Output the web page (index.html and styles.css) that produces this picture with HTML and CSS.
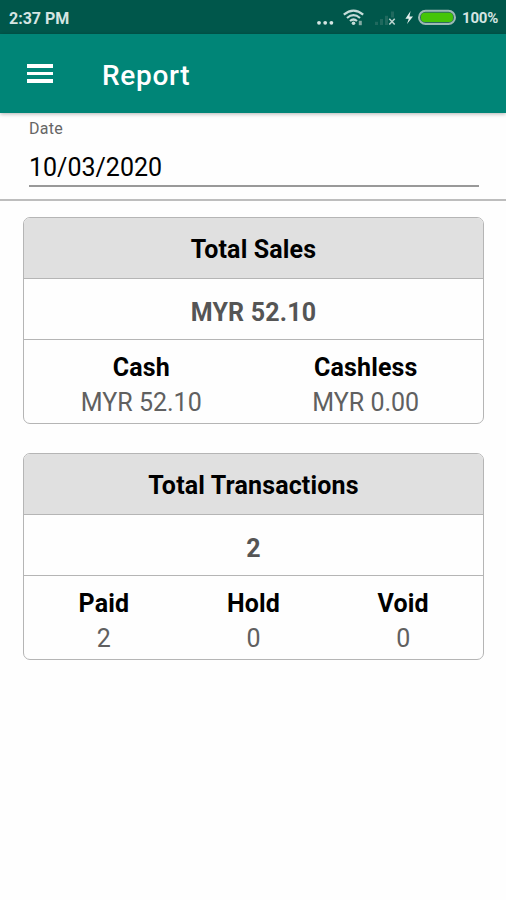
FILE: index.html
```
<!DOCTYPE html>
<html lang="en">
<head>
  <meta charset="UTF-8" />
  <meta name="viewport" content="width=device-width, initial-scale=1.0"/>
  <title>Report</title>
  <link rel="stylesheet" href="styles.css">
</head>
<body>

  <!-- Status bar -->
  <div class="status-bar">
    <span class="clock">2:37 PM</span>
    <svg class="status-icons" width="140" height="34" viewBox="0 0 140 34">
      <!-- dots -->
      <g fill="#d5e5e2">
        <circle cx="3" cy="22.8" r="1.9"/>
        <circle cx="9.2" cy="22.8" r="1.9"/>
        <circle cx="15.4" cy="22.8" r="1.9"/>
      </g>
      <!-- wifi -->
      <g fill="none" stroke="#c5dcd8" stroke-width="2.2">
        <path d="M27.8 14.6 Q37.5 6.6 47.2 14.6"/>
        <path d="M31 18 Q37.5 12.4 44 18"/>
        <path d="M34 21 Q37.5 18 41 21"/>
      </g>
      <circle cx="37.5" cy="23.2" r="1.8" fill="#c5dcd8"/>
      <path d="M44.3 20.8v4.4" stroke="#83aaa3" stroke-width="3"/>
      <!-- signal -->
      <g fill="#20695e">
        <rect x="59" y="21.8" width="3" height="3.2"/>
        <rect x="64" y="19" width="3" height="6"/>
        <rect x="69" y="15.8" width="3" height="9.2"/>
        <rect x="75" y="11.5" width="3" height="6"/>
      </g>
      <path d="M73.3 18.8l5.4 5.8M78.7 18.8l-5.4 5.8" stroke="#bdd4d0" stroke-width="1.5"/>
      <!-- charging -->
      <path d="M94.6 11l-5.2 7.8h3.4l-1.8 5.2 6-7.4h-3.6z" fill="#e4efed"/>
      <!-- battery -->
      <rect x="103" y="10.8" width="36" height="13.2" rx="6.6" fill="#2e6a60" stroke="#9db9b5" stroke-width="2"/>
      <rect x="105" y="12.8" width="32" height="9.2" rx="4" fill="#45c508"/>
    </svg>
    <span class="battery-level">100%</span>
  </div>

  <!-- Header -->
  <header>
    <div class="hamburger-menu">
      <span></span>
      <span></span>
      <span></span>
    </div>
    <h1>Report</h1>
  </header>

  <!-- Date -->
  <div class="date-section">
    <div class="date-field">
      <label>Date</label>
      <div class="date-value">10/03/2020</div>
    </div>
  </div>

  <!-- Main Content -->
  <div class="content">
    <div class="card">
      <h2>Total Sales</h2>
      <div class="total">MYR 52.10</div>
      <div class="details two">
        <div class="item">
          <h3>Cash</h3>
          <p>MYR 52.10</p>
        </div>
        <div class="item">
          <h3>Cashless</h3>
          <p>MYR 0.00</p>
        </div>
      </div>
    </div>

    <div class="card">
      <h2>Total Transactions</h2>
      <div class="total">2</div>
      <div class="details three">
        <div class="item">
          <h3>Paid</h3>
          <p>2</p>
        </div>
        <div class="item">
          <h3>Hold</h3>
          <p>0</p>
        </div>
        <div class="item">
          <h3>Void</h3>
          <p>0</p>
        </div>
      </div>
    </div>
  </div>

</body>
</html>
```
FILE: styles.css
```
:root {
  --primary-color: #008577;
  --primary-dark: #00574b;
  --border-color: #b5b5b5;
}

* {
  box-sizing: border-box;
  margin: 0;
  padding: 0;
}

body {
  font-family: Roboto, sans-serif;
  background-color: #fefefe;
  color: #000;
  min-height: 100vh;
}

.status-bar {
  display: flex;
  align-items: center;
  height: 34px;
  padding: 0 8px 0 9px;
  background-color: var(--primary-dark);
  color: #d5e5e2;
  font-size: 16px;
  font-weight: 700;
}

.clock {
  flex: 1;
  padding-top: 2px;
}

.battery-level {
  width: 36px;
  margin-left: 6px;
  padding-top: 2px;
  font-size: 15px;
  letter-spacing: -0.2px;
}

header {
  display: flex;
  align-items: center;
  height: 79px;
  padding-left: 27px;
  background-color: var(--primary-color);
  color: white;
  box-shadow: 0 1px 4px rgba(0, 0, 0, 0.3);
  position: relative;
}

.hamburger-menu {
  display: flex;
  flex-direction: column;
  gap: 4px;
  width: 26px;
}

.hamburger-menu span {
  height: 3.7px;
  background-color: white;
}

h1 {
  margin-left: 49px;
  padding-top: 3px;
  font-size: 28px;
  font-weight: 500;
  letter-spacing: 0.7px;
}

.date-section {
  height: 88px;
  padding: 6px 27px 0 29px;
  border-bottom: 2px solid #bdbdbd;
}

.date-field {
  height: 68px;
  border-bottom: 2px solid #999;
}

.date-field label {
  display: block;
  font-size: 16px;
  line-height: 20px;
  letter-spacing: 0.3px;
  color: #666;
}

.date-value {
  margin-top: 13px;
  font-size: 25px;
  line-height: 32px;
}

.content {
  display: flex;
  flex-direction: column;
  gap: 29px;
  padding: 16px 22px 0 23px;
}

.card {
  height: 207px;
  border: 1.5px solid var(--border-color);
  border-radius: 7px;
  overflow: hidden;
  text-align: center;
}

.card h2 {
  height: 61px;
  border-bottom: 1px solid var(--border-color);
  background-color: #e0e0e0;
  font-size: 25px;
  font-weight: 700;
  line-height: 63px;
  letter-spacing: 0.15px;
}

.total {
  height: 61px;
  border-bottom: 1px solid var(--border-color);
  color: #555;
  font-size: 25px;
  font-weight: 700;
  line-height: 67px;
  letter-spacing: 0.2px;
}

.details {
  display: grid;
  padding: 11px 5px 0;
}

.details.two {
  grid-template-columns: 1fr 1fr;
}

.details.three {
  grid-template-columns: 1fr 1fr 1fr;
}

.item h3 {
  font-size: 25px;
  font-weight: 700;
  line-height: 34px;
  letter-spacing: 0.15px;
}

.item p {
  color: #606060;
  font-size: 25px;
  font-weight: 400;
  line-height: 36px;
}
```
